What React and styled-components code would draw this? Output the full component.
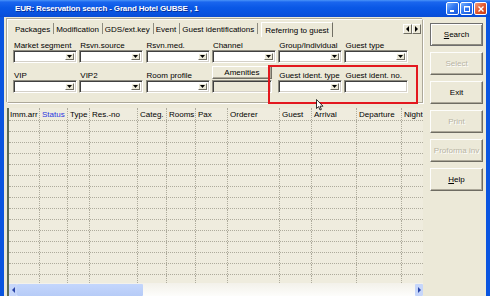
import React from 'react';
import styled, { createGlobalStyle } from 'styled-components';

const GlobalStyle = createGlobalStyle`
  html, body {
    margin: 0;
    padding: 0;
    background: #ffffff;
  }
  body {
    font-family: "Liberation Sans", Arial, sans-serif;
    font-size: 8px;
  }
`;

const Window = styled.div`
  position: relative;
  width: 490px;
  height: 296px;
  overflow: hidden;
  display: flex;
  flex-direction: column;
  background: #0a55e0;
`;

const TitleBar = styled.div`
  flex: none;
  height: 17px;
  display: flex;
  align-items: center;
  padding: 0 3px 0 15px;
  background: linear-gradient(#4a94f8 0%, #1a66ee 12%, #0a58e6 45%, #0852e0 80%, #0a4cd4 100%);
`;

const TitleText = styled.div`
  flex: 1;
  color: #ffffff;
  font-weight: bold;
  font-size: 8px;
  letter-spacing: -0.15px;
  text-shadow: 1px 1px 0 #0a2f9a;
`;

const WinButtons = styled.div`
  display: flex;
  gap: 1px;
`;

const WinButton = styled.div`
  width: 13px;
  height: 13px;
  border: 1px solid #ffffff;
  border-radius: 2px;
  box-sizing: border-box;
  background: ${p => (p.close
    ? 'linear-gradient(135deg, #f2a080, #e2582e 50%, #c83a14)'
    : 'linear-gradient(135deg, #7ab2ff, #2f75f0 50%, #1a58dc)')};
  display: flex;
  align-items: center;
  justify-content: center;
`;

const Body = styled.div`
  flex: 1;
  display: flex;
  margin: 0 4px;
  background: #ece9d8;
  min-height: 0;
`;

const Main = styled.div`
  width: 416px;
  margin-left: 3px;
  display: flex;
  flex-direction: column;
`;

const TabControl = styled.div`
  margin-top: 2px;
  height: 84px;
  box-sizing: border-box;
  border-top: 1px solid #ffffff;
  border-left: 1px solid #ffffff;
  border-right: 1px solid #aca899;
  border-bottom: 1px solid #aca899;
  box-shadow: -1px -1px 0 #aca899, 1px 1px 0 #ffffff;
  display: flex;
  flex-direction: column;
`;

const TabStrip = styled.div`
  height: 16px;
  flex: none;
  display: flex;
  align-items: flex-end;
  padding-left: 5px;
  position: relative;
`;

const Tab = styled.div`
  height: ${p => (p.active ? '15px' : '11px')};
  margin-bottom: ${p => (p.active ? '-1px' : '2px')};
  padding: 0 3px 0 ${p => (p.active ? '3px' : '2px')};
  display: flex;
  align-items: center;
  white-space: nowrap;
  color: #000000;
  box-sizing: border-box;
  border-right: 1px solid ${p => (p.active ? '#716f64' : '#8e8c80')};
  border-left: ${p => (p.active ? '1px solid #ffffff' : 'none')};
  border-top: ${p => (p.active ? '1px solid #ffffff' : 'none')};
  background: #ece9d8;
  margin-left: ${p => (p.active ? '3px' : '0')};
  padding-top: ${p => (p.active ? '0' : '1px')};
`;

const TabArrows = styled.div`
  position: absolute;
  right: 1px;
  top: 4px;
  display: flex;
`;

const TabArrow = styled.div`
  width: 9px;
  height: 10px;
  box-sizing: border-box;
  border: 1px solid;
  border-color: #ffffff #716f64 #716f64 #ffffff;
  display: flex;
  align-items: center;
  justify-content: center;
`;

const FieldGrid = styled.div`
  display: grid;
  grid-template-columns: repeat(6, 64px);
  grid-template-rows: 22px 26px;
  column-gap: 2.3px;
  row-gap: 4px;
  padding: 5px 0 0 5px;
`;

const Field = styled.div`
  display: flex;
  flex-direction: column;
  justify-content: flex-end;
  width: ${p => p.width || 64}px;
`;

const Label = styled.div`
  height: 9px;
  line-height: 9px;
  padding-left: 1px;
  white-space: nowrap;
  color: #000000;
`;

const Sunken = styled.div`
  height: 13px;
  flex: none;
  box-sizing: border-box;
  border: 1px solid;
  border-color: #8e8c80 #ffffff #ffffff #8e8c80;
  box-shadow: inset 1px 1px 0 #404040, inset -1px -1px 0 #d4d0c8;
  background: ${p => (p.disabled ? '#ece9d8' : '#ffffff')};
  display: flex;
  justify-content: flex-end;
  padding: 2px;
`;

const DropButton = styled.div`
  width: 9px;
  height: 100%;
  box-sizing: border-box;
  background: #ece9d8;
  border: 1px solid;
  border-color: #ffffff #716f64 #716f64 #ffffff;
  display: flex;
  align-items: center;
  justify-content: center;
`;

const SmallButton = styled.div`
  height: 13px;
  flex: none;
  margin-bottom: 1px;
  box-sizing: border-box;
  border: 1px solid;
  border-color: #ffffff #716f64 #716f64 #ffffff;
  box-shadow: inset -1px -1px 0 #aca899;
  display: flex;
  align-items: center;
  justify-content: center;
  color: #000000;
`;

const GridBox = styled.div`
  margin-top: 5px;
  flex: 1;
  min-height: 0;
  display: flex;
  flex-direction: column;
  border-left: 2px solid #5d6b53;
  background: #efecde;
  overflow: hidden;
`;

const Row = styled.div`
  flex: none;
  display: flex;
  height: ${p => (p.header ? '13px' : '11px')};
  border-bottom: 1px dotted #aeab9c;
  box-sizing: border-box;
`;

const Cell = styled.div`
  flex: none;
  width: ${p => p.width}px;
  box-sizing: border-box;
  border-right: 1px dotted #aeab9c;
  padding-left: ${p => (p.tight ? '1px' : '2px')};
  display: flex;
  align-items: center;
  white-space: nowrap;
  overflow: hidden;
  color: ${p => (p.blue ? '#2a34e0' : '#000000')};
`;

const Rows = styled.div`
  flex: 1;
  overflow: hidden;
`;

const HScroll = styled.div`
  flex: none;
  height: 13px;
  display: flex;
  align-items: center;
  background: linear-gradient(#f3f1ea, #fdfdfb);
`;

const ScrollArrow = styled.div`
  width: 8px;
  height: 12px;
  display: flex;
  align-items: center;
  justify-content: center;
  background: ${p => (p.tinted ? '#c6d6fa' : 'transparent')};
  border-radius: 1px;
`;

const Thumb = styled.div`
  width: 126px;
  height: 12px;
  background: linear-gradient(#c4d6fc, #b6cbf7);
  border-radius: 1px;
`;

const ScrollSpace = styled.div`
  flex: 1;
`;

const Side = styled.div`
  width: 53px;
  margin-left: 7px;
  padding-top: 6px;
  display: flex;
  flex-direction: column;
  gap: 6px;
`;

const SideButton = styled.div`
  height: 23px;
  box-sizing: border-box;
  border: 1px solid;
  border-color: ${p => (p.primary ? '#6e6e6e' : '#fdfdfb #6e6c62 #6e6c62 #fdfdfb')};
  box-shadow: ${p => (p.primary
    ? 'inset 1px 1px 0 #ffffff, inset -1px -1px 0 #8e8c80'
    : 'inset -1px -1px 0 #aca899')};
  background: #ece9d8;
  display: flex;
  align-items: center;
  justify-content: center;
  font-size: 8px;
  white-space: nowrap;
  color: ${p => (p.disabled ? '#b8b4a4' : '#000000')};
  text-shadow: ${p => (p.disabled ? '1px 1px 0 #ffffff' : 'none')};
`;

const Highlight = styled.div`
  position: absolute;
  left: 268px;
  top: 65px;
  width: 150px;
  height: 39px;
  box-sizing: border-box;
  border: 2px solid #e3181f;
  pointer-events: none;
`;

const Cursor = styled.svg`
  position: absolute;
  left: 316px;
  top: 99px;
`;

const Arrow = ({ dir = 'down', color = '#000' }) => {
  const pts = {
    down: '0,0 5,0 2.5,3',
    left: '3,0 3,6 0,3',
    right: '0,0 0,6 3,3',
  }[dir];
  const w = dir === 'down' ? 5 : 3;
  const h = dir === 'down' ? 3 : 6;
  return (
    <svg width={w} height={h} viewBox={`0 0 ${w} ${h}`}>
      <polygon points={pts} fill={color} />
    </svg>
  );
};

const Combo = () => (
  <Sunken>
    <DropButton>
      <Arrow />
    </DropButton>
  </Sunken>
);

const tabs = ['Packages', 'Modification', 'GDS/ext.key', 'Event', 'Guest identifications'];

const columns = [
  ['Imm.arr', 31],
  ['Status', 28, true],
  ['Type', 22],
  ['Res.-no', 48],
  ['Categ.', 29],
  ['Rooms', 29],
  ['Pax', 32],
  ['Orderer', 52],
  ['Guest', 32],
  ['Arrival', 45],
  ['Departure', 45],
  ['Night', 40],
];

const row1 = ['Market segment', 'Rsvn.source', 'Rsvn.med.', 'Channel', 'Group/Individual', 'Guest type'];

export default function App() {
  return (
    <>
      <GlobalStyle />
      <Window>
        <TitleBar>
          <TitleText>EUR: Reservation search - Grand Hotel GUBSE , 1</TitleText>
          <WinButtons>
            <WinButton>
              <svg width="6" height="6" viewBox="0 0 6 6"><rect x="0" y="4" width="4" height="2" fill="#fff" /></svg>
            </WinButton>
            <WinButton>
              <svg width="6" height="6" viewBox="0 0 6 6"><rect x="0.5" y="0.5" width="5" height="5" fill="none" stroke="#fff" /><rect x="0" y="0" width="6" height="1.5" fill="#fff" /></svg>
            </WinButton>
            <WinButton close>
              <svg width="6" height="6" viewBox="0 0 6 6"><path d="M0.5 0.5 L5.5 5.5 M5.5 0.5 L0.5 5.5" stroke="#fff" strokeWidth="1.4" /></svg>
            </WinButton>
          </WinButtons>
        </TitleBar>
        <Body>
          <Main>
            <TabControl>
              <TabStrip>
                {tabs.map(t => (
                  <Tab key={t}>{t}</Tab>
                ))}
                <Tab active>Referring to guest</Tab>
                <TabArrows>
                  <TabArrow><Arrow dir="left" /></TabArrow>
                  <TabArrow><Arrow dir="right" /></TabArrow>
                </TabArrows>
              </TabStrip>
              <FieldGrid>
                {row1.map(l => (
                  <Field key={l}>
                    <Label>{l}</Label>
                    <Combo />
                  </Field>
                ))}
                <Field>
                  <Label>VIP</Label>
                  <Combo />
                </Field>
                <Field>
                  <Label>VIP2</Label>
                  <Combo />
                </Field>
                <Field>
                  <Label>Room profile</Label>
                  <Combo />
                </Field>
                <Field width={60}>
                  <SmallButton>Amenities</SmallButton>
                  <Sunken disabled />
                </Field>
                <Field>
                  <Label>Guest ident. type</Label>
                  <Combo />
                </Field>
                <Field>
                  <Label>Guest ident. no.</Label>
                  <Sunken />
                </Field>
              </FieldGrid>
            </TabControl>
            <GridBox>
              <Row header>
                {columns.map(([name, w, blue], i) => (
                  <Cell key={name} width={w} blue={blue} tight={i === 0}>{name}</Cell>
                ))}
              </Row>
              <Rows>
                {Array.from({ length: 15 }, (_, i) => (
                  <Row key={i}>
                    {columns.map(([name, w]) => (
                      <Cell key={name} width={w} />
                    ))}
                  </Row>
                ))}
              </Rows>
              <HScroll>
                <ScrollArrow tinted><Arrow dir="left" color="#2a45a8" /></ScrollArrow>
                <Thumb />
                <ScrollSpace />
                <ScrollArrow tinted><Arrow dir="right" color="#2a45a8" /></ScrollArrow>
              </HScroll>
            </GridBox>
          </Main>
          <Side>
            <SideButton primary><span><u>S</u>earch</span></SideButton>
            <SideButton disabled>Select</SideButton>
            <SideButton>Exit</SideButton>
            <SideButton disabled>Print</SideButton>
            <SideButton disabled>Proforma inv</SideButton>
            <SideButton><span><u>H</u>elp</span></SideButton>
          </Side>
        </Body>
        <Highlight />
        <Cursor width="8" height="12" viewBox="0 0 8 12">
          <path d="M0.5 0.5 L0.5 9.5 L2.6 7.6 L4 11 L5.4 10.4 L4 7.2 L7 7.2 Z" fill="#fff" stroke="#000" strokeWidth="0.8" />
        </Cursor>
      </Window>
    </>
  );
}
